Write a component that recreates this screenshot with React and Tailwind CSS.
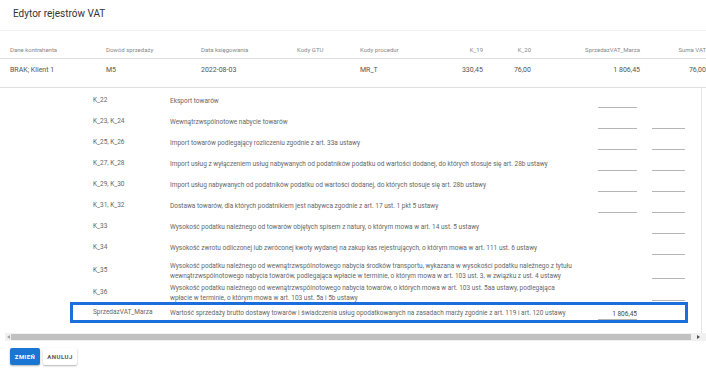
import React from 'react';

const columns = [
    { key: 'kontrahent', label: 'Dane kontrahenta' },
    { key: 'dowod', label: 'Dowód sprzedaży' },
    { key: 'data', label: 'Data księgowania' },
    { key: 'gtu', label: 'Kody GTU' },
    { key: 'procedury', label: 'Kody procedur' },
    { key: 'k19', label: 'K_19', right: true },
    { key: 'k20', label: 'K_20', right: true },
    { key: 'marza', label: 'SprzedazVAT_Marza', right: true },
    { key: 'suma', label: 'Suma VAT', right: true },
];

const row = {
    kontrahent: 'BRAK; Klient 1',
    dowod: 'M5',
    data: '2022-08-03',
    gtu: '',
    procedury: 'MR_T',
    k19: '330,45',
    k20: '76,00',
    marza: '1 806,45',
    suma: '76,00',
};

// a = first input, b = second input
const details = [
    { label: 'K_22', text: ['Eksport towarów'], a: true },
    { label: 'K_23, K_24', text: ['Wewnątrzwspólnotowe nabycie towarów'], a: true, b: true },
    { label: 'K_25, K_26', text: ['Import towarów podlegający rozliczeniu zgodnie z art. 33a ustawy'], a: true, b: true },
    { label: 'K_27, K_28', text: ['Import usług z wyłączeniem usług nabywanych od podatników podatku od wartości dodanej, do których stosuje się art. 28b ustawy'], a: true, b: true },
    { label: 'K_29, K_30', text: ['Import usług nabywanych od podatników podatku od wartości dodanej, do których stosuje się art. 28b ustawy'], a: true, b: true },
    { label: 'K_31, K_32', text: ['Dostawa towarów, dla których podatnikiem jest nabywca zgodnie z art. 17 ust. 1 pkt 5 ustawy'], a: true, b: true },
    { label: 'K_33', text: ['Wysokość podatku należnego od towarów objętych spisem z natury, o którym mowa w art. 14 ust. 5 ustawy'], b: true },
    { label: 'K_34', text: ['Wysokość zwrotu odliczonej lub zwróconej kwoty wydanej na zakup kas rejestrujących, o którym mowa w art. 111 ust. 6 ustawy'], b: true },
    {
        label: 'K_35',
        text: [
            'Wysokość podatku należnego od wewnątrzwspólnotowego nabycia środków transportu, wykazana w wysokości podatku należnego z tytułu',
            'wewnątrzwspólnotowego nabycia towarów, podlegająca wpłacie w terminie, o którym mowa w art. 103 ust. 3, w związku z ust. 4 ustawy',
        ],
        b: true,
    },
    {
        label: 'K_36',
        text: [
            'Wysokość podatku należnego od wewnątrzwspólnotowego nabycia towarów, o których mowa w art. 103 ust. 5aa ustawy, podlegająca',
            'wpłacie w terminie, o którym mowa w art. 103 ust. 5a i 5b ustawy',
        ],
        b: true,
    },
    {
        label: 'SprzedazVAT_Marza',
        text: ['Wartość sprzedaży brutto dostawy towarów i świadczenia usług opodatkowanych na zasadach marży zgodnie z art. 119 i art. 120 ustawy'],
        a: true,
        value: '1 806,45',
        active: true,
    },
];

const grid = 'grid grid-cols-[96px_95px_96px_63px_80px_43px_48px_109px_66px]';

const Field = ({ value }) => (
    <input
        readOnly
        value={value || ''}
        className="w-full h-[12px] bg-transparent border-b border-[#b5b5b5] text-right text-[6.5px] text-[#444] outline-none px-0 mt-[3px]"
    />
);

const App = () => {
    return (
        <div className="w-[706px] h-[375px] bg-white overflow-hidden font-['Roboto',sans-serif]">
            <div className="h-[30px] pl-[13px] pt-[6px] text-[10px] text-[#333]">Edytor rejestrów VAT</div>

            {/* main table */}
            <div className="w-[706px] border-t border-[#eeeeee]">
                <div className={`${grid} h-[28px] items-start pt-[14px] pl-[10px] border-b border-[#e0e0e0] text-[6px] text-[#888]`}>
                    {columns.map(c => (
                        <div key={c.key} className={c.right ? 'text-right whitespace-nowrap' : 'whitespace-nowrap'}>{c.label}</div>
                    ))}
                </div>
                <div className={`${grid} h-[29px] items-start pt-[6px] pl-[10px] border-b border-[#e0e0e0] text-[7px] text-[#555]`}>
                    {columns.map(c => (
                        <div key={c.key} className={c.right ? 'text-right whitespace-nowrap' : 'whitespace-nowrap'}>{row[c.key]}</div>
                    ))}
                </div>
            </div>

            <div className="ml-[5px] w-[697px]">
                {/* expanded details */}
                <div className="border-r border-[#e6e6e6] pt-[2px] pb-[10px]">
                    {details.map(d => (
                        <div
                            key={d.label}
                            className={`ml-[65px] w-[618px] border-[3px] ${d.active ? 'border-[#1a6fdc]' : 'border-transparent'} ${d.text.length > 1 ? 'h-[22px]' : 'h-[21px]'} grid grid-cols-[20px_77px_428px_39px_15px_33px] items-center text-[6.5px] text-[#666]`}
                        >
                            <div />
                            <div className="whitespace-nowrap">{d.label}</div>
                            <div className="leading-[10px] whitespace-nowrap">
                                {d.text.map((t, i) => <div key={i}>{t}</div>)}
                            </div>
                            <div>{d.a && <Field value={d.value} />}</div>
                            <div />
                            <div>{d.b && <Field />}</div>
                        </div>
                    ))}
                </div>
            </div>

            {/* horizontal scrollbar */}
            <div className="ml-[5px] w-[701px] h-[8px] bg-[#f1f1f1] flex items-center">
                <div className="w-[6px] flex justify-center">
                    <div className="w-0 h-0 border-y-[2px] border-y-transparent border-r-[3px] border-r-[#a3a3a3]" />
                </div>
                <div className="w-[680px] h-[6px] bg-[#c1c1c1]" />
                <div className="flex-1 flex justify-center">
                    <div className="w-0 h-0 border-y-[2px] border-y-transparent border-l-[3px] border-l-[#505050]" />
                </div>
            </div>

            {/* actions */}
            <div className="flex gap-[3px] pl-[10px] pt-[7px]">
                <button className="h-[17px] w-[30px] rounded-[2px] bg-[#1976d2] text-white text-[6px] font-bold tracking-[0.4px] shadow-[0_1px_2px_rgba(0,0,0,0.3)]">
                    ZMIEŃ
                </button>
                <button className="h-[17px] w-[34px] rounded-[2px] bg-white text-[#555] text-[6px] font-bold tracking-[0.5px] shadow-[0_1px_2px_rgba(0,0,0,0.3)]">
                    ANULUJ
                </button>
            </div>
        </div>
    );
};

export default App;
